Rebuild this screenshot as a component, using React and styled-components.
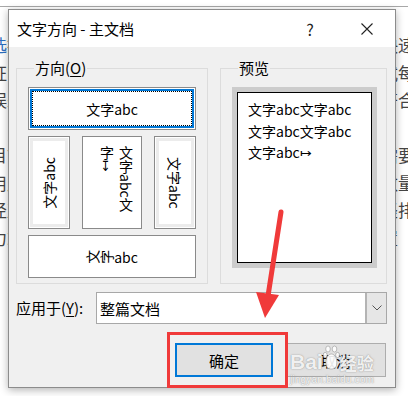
import React from 'react'
import styled, { createGlobalStyle } from 'styled-components'

const Global = createGlobalStyle`
  html, body { margin: 0; padding: 0; background: #fff; }
  body { font-family: "Noto Sans CJK SC", "Noto Sans", sans-serif; }
`

const Page = styled.div`
  position: relative;
  width: 408px;
  height: 396px;
  overflow: hidden;
  background: #fff;
`

const Doc = styled.div`
  border-top: 1px solid #a8a8a8;
  margin-top: 6px;
  padding-top: 24px;
  margin-left: -10px;
  font-size: 17px;
  line-height: 27.5px;
  color: #444;
  white-space: nowrap;
`

const DocLine = styled.div`
  height: 27.5px;
`

const DocLink = styled.span`
  color: #2d6fc0;
  text-decoration: ${p => (p.underline ? 'underline' : 'none')};
`

const Dialog = styled.div`
  position: absolute;
  left: 8px;
  top: 9px;
  width: 386px;
  height: 377px;
  border: 1px solid #8c8c8c;
  background: #f0f0f0;
  box-shadow: 0 2px 8px rgba(0, 0, 0, 0.3);
  display: flex;
  flex-direction: column;
`

const TitleBar = styled.div`
  height: 37px;
  background: #fff;
  display: flex;
  align-items: center;
  padding-left: 8px;
  font-size: 15px;
  color: #000;
`

const Title = styled.div`
  flex: 1;
  margin-top: -1px;
`

const TitleButton = styled.div`
  width: 46px;
  height: 37px;
  display: flex;
  align-items: center;
  justify-content: center;
  font-size: 16px;
  color: #222;
  margin-right: ${p => p.mr || 0}px;
`

const Body = styled.div`
  flex: 1;
  padding: 13px 8px 0 7px;
  display: flex;
  flex-direction: column;
`

const Groups = styled.div`
  display: grid;
  grid-template-columns: 192px 167px;
  gap: 12px;
`

const Group = styled.fieldset`
  margin: 0;
  border: 1px solid #dcdcdc;
  padding: 11px ${p => p.pr}px 7px ${p => p.pl}px;
  min-width: 0;
  height: 224px;
  box-sizing: border-box;
`

const Legend = styled.legend`
  font-size: 15px;
  line-height: 16px;
  padding: 0 1px;
  margin-left: 6px;
  color: #000;
`

const U = styled.span`
  text-decoration: underline;
  text-underline-offset: 2px;
`

const Orient = styled.div`
  display: flex;
  flex-direction: column;
  gap: 6px;
`

const Choice = styled.div`
  position: relative;
  box-sizing: border-box;
  height: ${p => p.h}px;
  width: ${p => p.w ? `${p.w}px` : 'auto'};
  background: #fff;
  border: 1px solid #8a8a8a;
  display: flex;
  align-items: center;
  justify-content: center;
  overflow: hidden;
  font-size: 14px;
  color: #000;
  box-shadow: ${p =>
    p.selected
      ? 'inset 0 0 0 1px #fff, inset 0 0 0 3px #0078d7'
      : p.dim
        ? 'inset 0 0 0 1px #fff, inset 0 0 0 4px #ececec'
        : 'none'};

  &::after {
    content: '';
    display: ${p => (p.selected ? 'block' : 'none')};
    position: absolute;
    inset: 3px;
    border: 1px dotted #000;
  }
`

const VRow = styled.div`
  display: flex;
  justify-content: space-between;
`

const SideRight = styled.span`
  writing-mode: vertical-rl;
  text-orientation: sideways;
  white-space: nowrap;
`

const SideLeft = styled.span`
  writing-mode: vertical-rl;
  text-orientation: sideways;
  white-space: nowrap;
  transform: rotate(180deg);
`

const Columns = styled.div`
  writing-mode: vertical-rl;
  align-self: stretch;
  width: 100%;
  box-sizing: border-box;
  padding: 9px 6px 14px 0;
  line-height: 19px;
  word-break: break-all;
`

const Rotated = styled.span`
  writing-mode: vertical-rl;
  white-space: nowrap;
  flex-shrink: 0;
  transform: rotate(-90deg);
`

const PreviewFrame = styled.div`
  height: 181px;
  background: #fff;
  border: 5px solid #cccccc;
  box-sizing: border-box;
`

const Sheet = styled.div`
  height: 100%;
  border: 1px solid #000;
  box-sizing: border-box;
  padding: 6px 0 0 10px;
  font-size: 14px;
  line-height: 21.5px;
  color: #000;
`

const ApplyRow = styled.div`
  display: flex;
  align-items: center;
  margin-top: 8px;
  height: 32px;
`

const ApplyLabel = styled.div`
  width: 80px;
  font-size: 15px;
  color: #000;
  margin-top: -1px;
`

const Select = styled.div`
  flex: 1;
  height: 32px;
  box-sizing: border-box;
  border: 1px solid #a8a8a8;
  background: #fff;
  display: flex;
  align-items: center;
`

const SelectValue = styled.div`
  flex: 1;
  padding-left: 3px;
  font-size: 15px;
  color: #000;
`

const SelectArrow = styled.div`
  width: 19px;
  height: 100%;
  background: #e6e6e6;
  border-left: 2px solid #b4b4b4;
  display: flex;
  align-items: center;
  justify-content: center;
`

const ButtonRow = styled.div`
  display: flex;
  justify-content: flex-end;
  gap: 13px;
  margin-top: 19px;
  margin-right: 1px;
`

const Button = styled.div`
  box-sizing: border-box;
  width: ${p => p.w}px;
  height: 34px;
  background: #e1e1e1;
  border: ${p => (p.primary ? '2px solid #0078d7' : '1px solid #adadad')};
  display: flex;
  align-items: center;
  justify-content: center;
  font-size: 15px;
  color: #000;
`

const Highlight = styled.div`
  position: absolute;
  left: 167px;
  top: 332px;
  width: 121px;
  height: 56px;
  box-sizing: border-box;
  border: 3px solid #f03a3a;
`

const Overlay = styled.svg`
  position: absolute;
  left: 0;
  top: 0;
  pointer-events: none;
`

const Watermark = styled.div`
  position: absolute;
  left: 290px;
  top: 343px;
  color: rgba(255, 255, 255, 0.9);
  text-shadow: 0 0 1px rgba(120, 120, 120, 0.8), 0 0 2px rgba(160, 160, 160, 0.5);
  font-family: "Liberation Sans", Arial, sans-serif;
  pointer-events: none;
`

const WmMain = styled.div`
  display: flex;
  align-items: flex-end;
  font-size: 21px;
  font-weight: bold;
  line-height: 22px;
  height: 30px;
`

const WmCn = styled.span`
  font-family: "Noto Sans CJK SC", sans-serif;
  font-size: 17px;
  font-weight: bold;
  line-height: 20px;
`

const WmUrl = styled.div`
  font-size: 10px;
  line-height: 12px;
  letter-spacing: 0.2px;
  margin-top: 1px;
`

function Paw() {
  return (
    <svg width="17" height="28" viewBox="0 0 17 28">
      <g fill="rgba(255,255,255,0.9)" stroke="rgba(130,130,130,0.7)" strokeWidth="0.7">
        <ellipse cx="5" cy="4" rx="2.3" ry="3" />
        <ellipse cx="11.5" cy="4" rx="2.3" ry="3" />
        <ellipse cx="2.2" cy="10" rx="2" ry="2.6" />
        <ellipse cx="14.6" cy="10" rx="2" ry="2.6" />
        <path d="M8.3 9 C4 9 2.5 15 3 19 C3.4 23 6 24 8.3 24 C10.8 24 13.4 23 13.7 19 C14.2 15 12.6 9 8.3 9 Z" />
      </g>
    </svg>
  )
}

export default function App() {
  return (
    <Page>
      <Global />
      <Doc>
        <DocLine><DocLink>选</DocLink>择需要修改的文本内容后打开文字方向对话框可以快速设置其</DocLine>
        <DocLine>证明文档排版时候的方向设置以及各个段落的排列方式每月</DocLine>
        <DocLine>误差修改文档内容后可以在预览窗口中查看效果是否符合</DocLine>
        <DocLine />
        <DocLine>目前文字方向可以设置为横排或者竖排两种方式选择需要的</DocLine>
        <DocLine>用户可以根据需要选择合适的文字方向并设置适当的数量</DocLine>
        <DocLine>径直点击确定按钮即可完成设置完成后文档会显示为竖排<DocLink underline>页面</DocLink></DocLine>
        <DocLine>力求排版美观整齐清晰便于阅读和打印的文档格式设置</DocLine>
      </Doc>

      <Dialog>
        <TitleBar>
          <Title>文字方向 - 主文档</Title>
          <TitleButton mr={11}>?</TitleButton>
          <TitleButton mr={5}>
            <svg width="12" height="12" viewBox="0 0 12 12">
              <path d="M0.5 0.5 L11.5 11.5 M11.5 0.5 L0.5 11.5" stroke="#222" strokeWidth="1.1" />
            </svg>
          </TitleButton>
        </TitleBar>
        <Body>
          <Groups>
            <Group pl={11} pr={11}>
              <Legend>方向(<U>O</U>)</Legend>
              <Orient>
                <Choice h={43} selected>文字abc</Choice>
                <VRow>
                  <Choice h={93} w={42} dim><SideLeft>文字abc</SideLeft></Choice>
                  <Choice h={93} w={60}><Columns>文字abc文字↦</Columns></Choice>
                  <Choice h={93} w={42} dim><SideRight>文字abc</SideRight></Choice>
                </VRow>
                <Choice h={43}><Rotated>文字abc</Rotated></Choice>
              </Orient>
            </Group>
            <Group pl={11} pr={9}>
              <Legend>预览</Legend>
              <PreviewFrame>
                <Sheet>
                  文字abc文字abc<br />
                  文字abc文字abc<br />
                  文字abc↦
                </Sheet>
              </PreviewFrame>
            </Group>
          </Groups>

          <ApplyRow>
            <ApplyLabel>应用于(<U>Y</U>):</ApplyLabel>
            <Select>
              <SelectValue>整篇文档</SelectValue>
              <SelectArrow>
                <svg width="10" height="6" viewBox="0 0 10 6">
                  <path d="M0.5 0.5 L5 5 L9.5 0.5" fill="none" stroke="#555" strokeWidth="1" />
                </svg>
              </SelectArrow>
            </Select>
          </ApplyRow>

          <ButtonRow>
            <Button w={98} primary>确定</Button>
            <Button w={100}>取消</Button>
          </ButtonRow>
        </Body>
      </Dialog>

      <Watermark>
        <WmMain>Bai<Paw /><WmCn>经验</WmCn></WmMain>
        <WmUrl>jingyan.baidu.com</WmUrl>
      </Watermark>

      <Highlight />
      <Overlay width="408" height="396" viewBox="0 0 408 396">
        <path d="M281 212 L268 296" stroke="#f03a3a" strokeWidth="5" strokeLinecap="round" />
        <polygon points="256,292 279,295 265,318" fill="#f03a3a" />
      </Overlay>
    </Page>
  )
}
